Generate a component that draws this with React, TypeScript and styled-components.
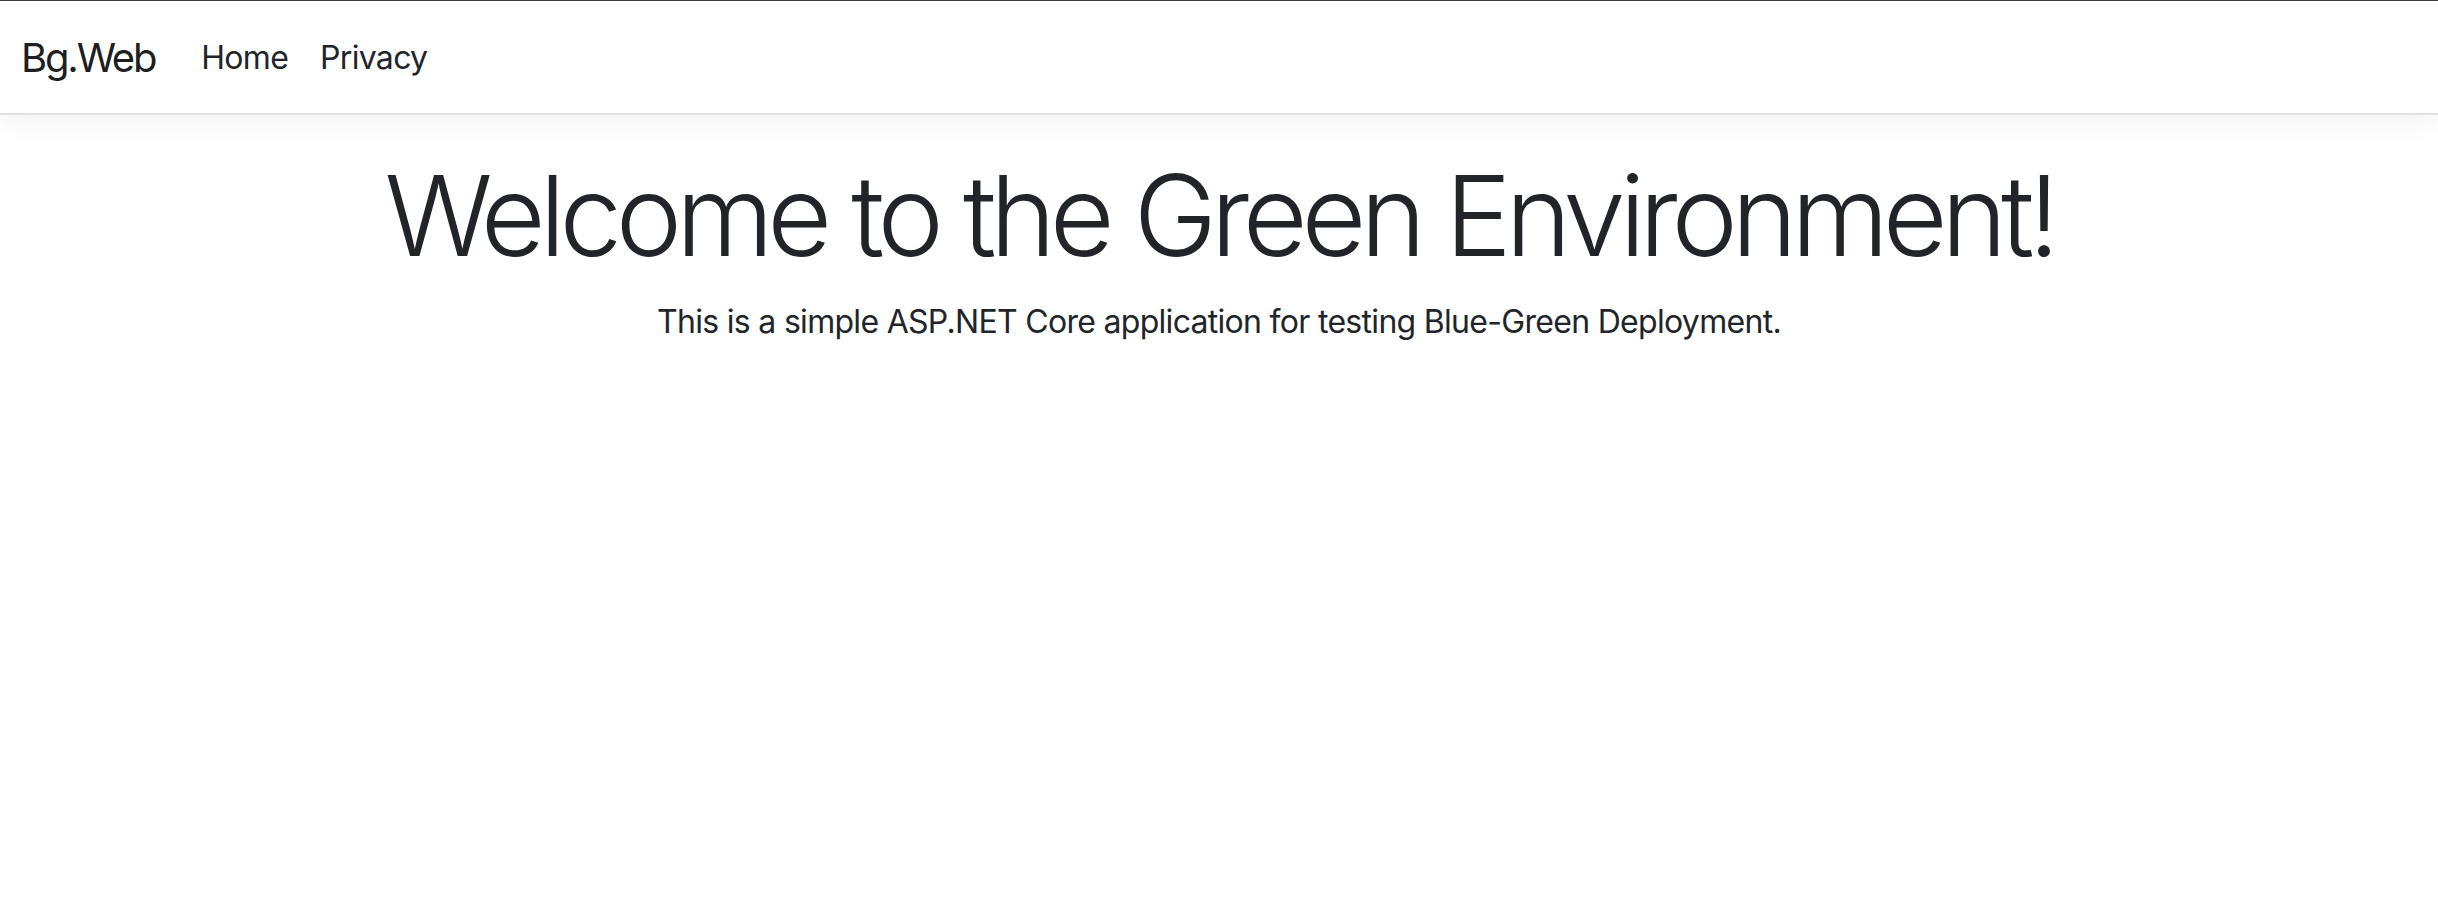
import React from "react";
import styled, { createGlobalStyle } from "styled-components";

const Global = createGlobalStyle`
  *, *::before, *::after { box-sizing: border-box; }
  html, body { margin: 0; padding: 0; background: #fff; }
  body {
    font-family: Inter, "Noto Sans", "Liberation Sans", sans-serif;
    font-size: 32px;
    line-height: 1.5;
    color: #212529;
  }
`;

const Header = styled.header`
  display: block;
`;

const NavBar = styled.nav`
  display: flex;
  align-items: center;
  border-top: 1px solid #3a3a3a;
  padding: 17px 21px 15px;
  background: #fff;
  border-bottom: 2px solid #dee2e6;
  box-shadow: 0 8px 24px rgba(0, 0, 0, 0.05);
  margin-bottom: 33px;
`;

const Brand = styled.a`
  font-size: 40px;
  line-height: 60px;
  padding: 10px 0;
  margin-right: 30px;
  color: rgba(0, 0, 0, 0.9);
  text-decoration: none;
  letter-spacing: -2.2px;
`;

const NavList = styled.ul`
  display: flex;
  list-style: none;
  margin: 0;
  padding: 0;
`;

const NavLink = styled.a`
  display: block;
  padding: 16px 16px;
  font-size: 32px;
  line-height: 48px;
  color: #212529;
  text-decoration: none;
  letter-spacing: -0.7px;
`;

const Container = styled.div`
  max-width: 2280px;
  margin: 0 auto;
  padding: 0 24px 32px;
`;

const Center = styled.div`
  text-align: center;
`;

const Display = styled.h1`
  font-size: 112px;
  font-weight: 300;
  line-height: 1.2;
  margin: 0 0 16px;
  letter-spacing: -6.25px;
`;

const Lead = styled.p`
  margin: 0 0 32px;
  font-size: 32px;
  line-height: 48px;
  letter-spacing: -0.7px;
`;

export default function App() {
  return (
    <>
      <Global />
      <Header>
        <NavBar>
          <Brand href="#">Bg.Web</Brand>
          <NavList>
            <li><NavLink href="#">Home</NavLink></li>
            <li><NavLink href="#">Privacy</NavLink></li>
          </NavList>
        </NavBar>
      </Header>
      <Container>
        <main>
          <Center>
            <Display>Welcome to the Green Environment!</Display>
            <Lead>This is a simple ASP.NET Core application for testing Blue-Green Deployment.</Lead>
          </Center>
        </main>
      </Container>
    </>
  );
}
